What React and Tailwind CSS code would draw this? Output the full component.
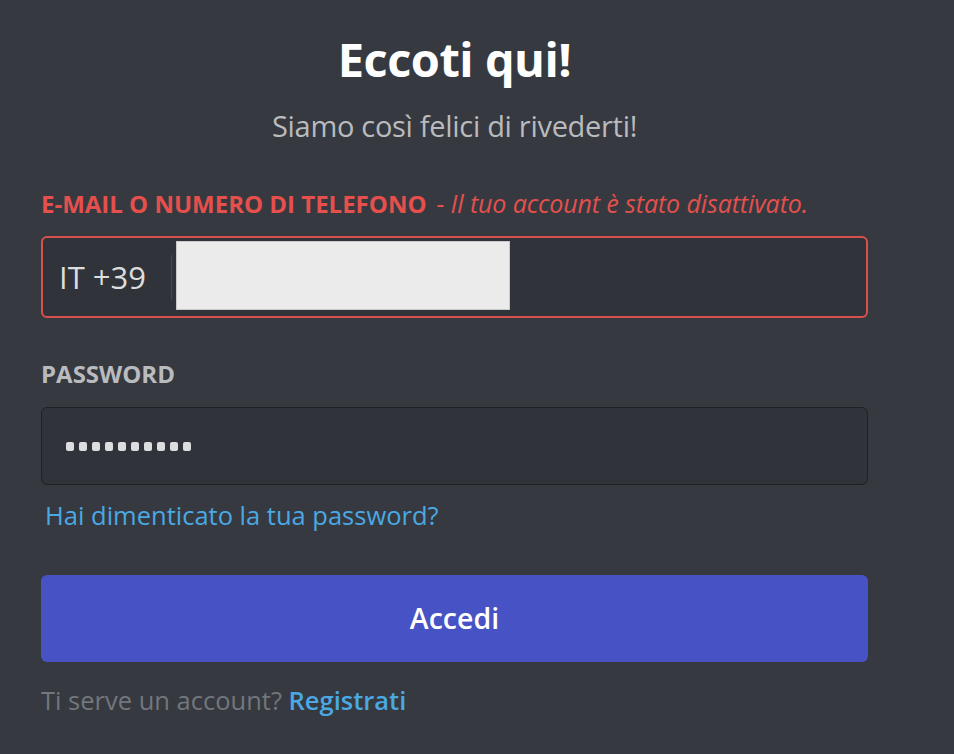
import React from 'react';

const font = { fontFamily: '"Open Sans", "Noto Sans", sans-serif' };

const PasswordDots = ({ count = 10 }) => (
    <div className="flex items-center gap-[5px]">
        {Array.from({ length: count }).map((_, i) => (
            <span key={i} className="block w-[8px] h-[9px] rounded-[2px] bg-[#dcddde]" />
        ))}
    </div>
);

export default function App() {
    return (
        <div className="min-h-[754px] w-full bg-[#36393f] overflow-hidden" style={font}>
            <div className="ml-[41px] w-[827px] flex flex-col pt-[31px]">
                {/* Header */}
                <h1 className="text-center text-white font-bold text-[47px] leading-[56px] tracking-[-0.5px]">
                    Eccoti qui!
                </h1>
                <p className="mt-[21px] text-center text-[#b9bbbe] text-[29px] leading-[36px] tracking-[-0.3px]">
                    Siamo così felici di rivederti!
                </p>

                {/* Phone / e-mail */}
                <div className="mt-[45px] flex items-baseline text-[#e5504d] leading-[28px] whitespace-nowrap">
                    <span className="font-bold text-[24px]">E-MAIL O NUMERO DI TELEFONO</span>
                    <span className="ml-[10px] italic font-medium text-[25px] tracking-[-0.1px]">- Il tuo account è stato disattivato.</span>
                </div>
                <div className="mt-[18px] h-[82px] flex items-center rounded-[6px] border-2 border-[#d9504f] bg-[#303339]">
                    <span className="pl-[16px] w-[128px] text-[31px] text-[#dcddde]">IT +39</span>
                    <span className="w-px h-[45px] bg-[#45484e]" />
                    <div className="ml-[4px] -mt-[3px] w-[334px] h-[69px] bg-[#ebebeb] border border-[#c9c9c9]" />
                </div>

                {/* Password */}
                <label className="mt-[42px] font-bold text-[24px] leading-[28px] text-[#b9bbbe]">
                    PASSWORD
                </label>
                <div className="mt-[19px] h-[78px] flex items-center pl-[24px] rounded-[6px] border border-[#1f2124] bg-[#303339]">
                    <PasswordDots />
                </div>
                <a className="mt-[15px] ml-[4px] text-[25.5px] leading-[30px] text-[#4aa8e3] cursor-pointer">
                    Hai dimenticato la tua password?
                </a>

                {/* Submit */}
                <button className="mt-[45px] h-[87px] w-full rounded-[6px] bg-[#4752c4] text-white text-[28.5px] font-semibold">
                    Accedi
                </button>

                <div className="mt-[23px] text-[25.5px] leading-[30px]">
                    <span className="text-[#72767d]">Ti serve un account? </span>
                    <a className="text-[#4aa8e3] font-semibold cursor-pointer">Registrati</a>
                </div>
            </div>
        </div>
    );
}
